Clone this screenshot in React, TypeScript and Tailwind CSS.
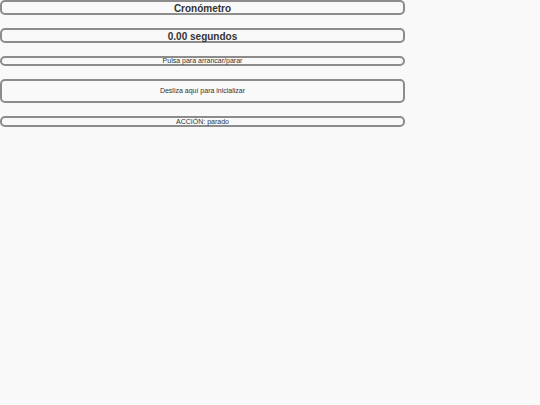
import React from 'react';

const box = 'flex items-center justify-center border-2 border-[#8c8c8c] rounded-[5px] text-[#333]';

export default function App() {
  return (
    <div className="min-h-[405px] bg-[#f9f9f9]" style={{ fontFamily: '"Liberation Sans", Arial, sans-serif' }}>
      <div className="w-[405px] flex flex-col gap-[13px]">
        <div className={`${box} h-[15px] text-[10px] font-bold pt-px`}>Cronómetro</div>
        <div className={`${box} h-[15px] text-[10px] font-bold pt-px`}>0.00 segundos</div>
        <div className={`${box} h-[10px] text-[7px] pt-px`}>Pulsa para arrancar/parar</div>
        <div className={`${box} h-[24px] text-[7px] pt-px`}>Desliza aquí para inicializar</div>
        <div className={`${box} h-[11px] text-[7px] pt-px`}>ACCIÓN: parado</div>
      </div>
    </div>
  );
}
